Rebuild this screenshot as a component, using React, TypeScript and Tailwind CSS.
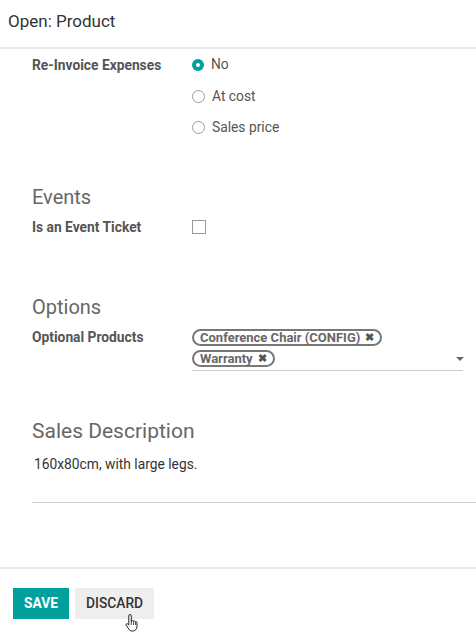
import React, { useState } from 'react';

type Tag = { id: number; name: string };

const Radio: React.FC<{ checked: boolean; label: string; onClick: () => void }> = ({ checked, label, onClick }) => (
  <button onClick={onClick} className="flex items-center h-[31.5px] gap-[7px] text-left">
    {checked ? (
      <span className="w-[12px] h-[12px] rounded-full bg-[#00a09d] flex items-center justify-center">
        <span className="w-[4px] h-[4px] rounded-full bg-white" />
      </span>
    ) : (
      <span className="w-[13px] h-[13px] rounded-full border border-[#9a9a9a] bg-white" />
    )}
    <span className="text-[13.8px] text-[#555]">{label}</span>
  </button>
);

const Row: React.FC<{ label: string; children: React.ReactNode }> = ({ label, children }) => (
  <div className="flex">
    <div className="w-[160px] shrink-0 text-[13.8px] font-bold text-[#555] leading-[20px]">{label}</div>
    <div className="flex-1">{children}</div>
  </div>
);

export default function App() {
  const [invoice, setInvoice] = useState('No');
  const [ticket, setTicket] = useState(false);
  const [tags, setTags] = useState<Tag[]>([
    { id: 1, name: 'Conference Chair (CONFIG)' },
    { id: 2, name: 'Warranty' },
  ]);

  return (
    <div className="w-[476px] h-[636px] bg-white flex flex-col font-['Roboto',sans-serif] text-[#4c4c4c] overflow-hidden">
      {/* Dialog header */}
      <div className="h-[49px] flex items-center px-[8px] border-b-2 border-[#e8e8e8] shrink-0">
        <h4 className="text-[17px] text-[#333] -mt-[3px]">Open: Product</h4>
      </div>

      <div className="flex-1 pl-[32px] pr-[13px] pt-[6px]">
        <Row label="Re-Invoice Expenses">
          <div className="flex flex-col -mt-[6px]">
            {['No', 'At cost', 'Sales price'].map(opt => (
              <Radio key={opt} label={opt} checked={invoice === opt} onClick={() => setInvoice(opt)} />
            ))}
          </div>
        </Row>

        <h2 className="mt-[39px] text-[20px] text-[#666] leading-[28px]">Events</h2>
        <div className="mt-[6px]">
          <Row label="Is an Event Ticket">
            <button
              onClick={() => setTicket(!ticket)}
              className="mt-[3px] w-[14px] h-[14px] border border-[#999] bg-white flex items-center justify-center text-[10px] text-[#00a09d]"
            >
              {ticket ? '✓' : ''}
            </button>
          </Row>
        </div>

        <h2 className="mt-[56px] text-[20px] text-[#666] leading-[28px]">Options</h2>
        <div className="mt-[6px]">
          <Row label="Optional Products">
            <div className="flex items-end border-b border-[#ccc] pb-[3px]">
              <div className="flex-1 flex flex-col items-start gap-[4px] mt-[2px]">
                {tags.map(t => (
                  <span
                    key={t.id}
                    className="flex items-center h-[17px] px-[6px] rounded-full border-2 border-[#777] text-[13px] font-bold text-[#666] leading-none"
                  >
                    {t.name}
                    <button
                      onClick={() => setTags(tags.filter(x => x.id !== t.id))}
                      className="ml-[5px] text-[11px] text-[#555]"
                    >
                      ✖
                    </button>
                  </span>
                ))}
              </div>
              <span className="mb-[6px] mr-[-1px] w-0 h-0 border-l-[4px] border-r-[4px] border-t-[4px] border-l-transparent border-r-transparent border-t-[#666]" />
            </div>
          </Row>
        </div>

        <h2 className="mt-[46px] text-[21px] text-[#666] leading-[28px]">Sales Description</h2>
        <div className="mt-[9px] mr-[-13px] border-b border-[#ccc] h-[49px] text-[13.8px] text-[#333] pl-[2px]">
          160x80cm, with large legs.
        </div>
      </div>

      {/* Dialog footer */}
      <div className="h-[69px] border-t-2 border-[#e8e8e8] flex items-start gap-[6px] px-[13px] pt-[19px] shrink-0">
        <button className="h-[31px] px-[11px] bg-[#00a09d] text-white text-[13.8px] font-bold">SAVE</button>
        <button className="relative h-[31px] px-[11px] bg-[#eeeeee] text-[#333] text-[13.8px] font-medium">
          DISCARD
          {/* pointer cursor over the button */}
          <svg className="absolute left-[50px] top-[25px]" width="16" height="20" viewBox="0 0 16 20">
            <path
              d="M5 1.5c.8 0 1.3.5 1.3 1.3v6l.3-1c.7-.5 1.6-.3 1.9.4.6-.5 1.5-.3 1.8.5.6-.4 1.5-.1 1.7.7v4c0 2.5-1.6 4.6-4.2 4.6H7c-1.4 0-2.3-.6-3-1.6L1.2 12.2c-.4-.7 0-1.4.7-1.5.5 0 .9.2 1.3.6l.6.8V2.8c0-.8.5-1.3 1.2-1.3z"
              fill="#fff"
              stroke="#222"
              strokeWidth="1"
            />
            <path d="M6.3 9v3M8.5 8.5v3.5M10.5 9v3" stroke="#222" strokeWidth="0.8" />
          </svg>
        </button>
      </div>
    </div>
  );
}
